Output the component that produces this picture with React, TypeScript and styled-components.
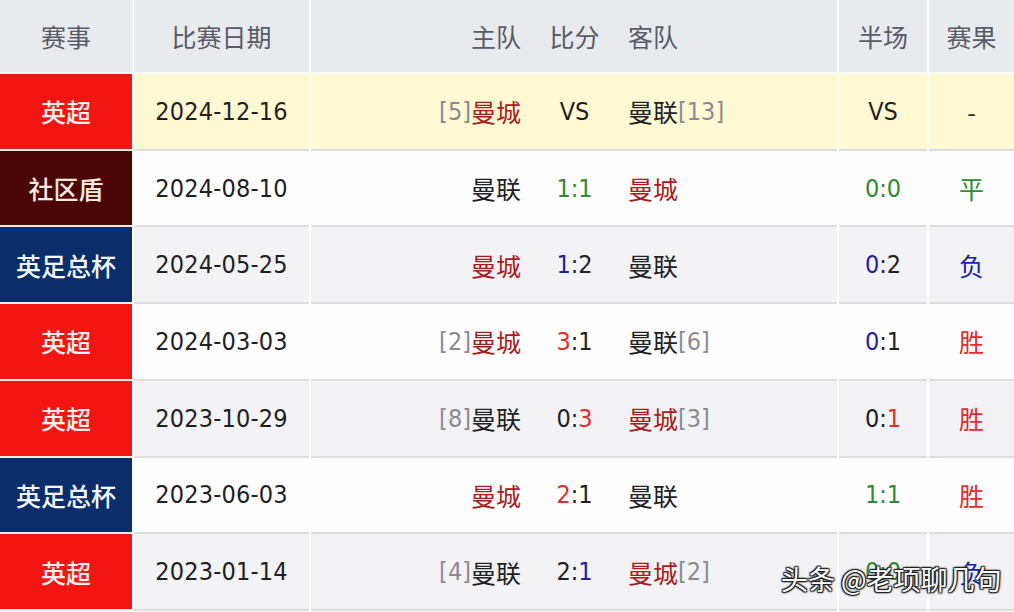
import styled, {createGlobalStyle, css} from "styled-components";

const GlobalStyle = createGlobalStyle`
  html, body {
    margin: 0;
    padding: 0;
    background: #ffffff;
  }
  body {
    font-family: "DejaVu Sans Condensed", "DejaVu Sans", "Noto Sans CJK SC", sans-serif;
  }
`

type Tone = 'win' | 'lose' | 'draw';
type Bg = 'yellow' | 'white' | 'grey';
type Comp = 'epl' | 'shield' | 'fa';

interface Team {
    name: string;
    rank?: string;
    city?: boolean;
}

interface Score {
    h: string;
    a: string;
    side?: 'h' | 'a';
    tone?: Tone;
}

interface Match {
    comp: Comp;
    date: string;
    bg: Bg;
    home: Team;
    away: Team;
    score?: Score;
    half?: Score;
    result: string;
    resultTone?: Tone;
}

const compNames: Record<Comp, string> = {
    epl: '英超',
    shield: '社区盾',
    fa: '英足总杯',
};

const compColors: Record<Comp, { bg: string; fg: string }> = {
    epl: {bg: '#f31512', fg: '#fff1ee'},
    shield: {bg: '#4a0505', fg: '#ffeae2'},
    fa: {bg: '#0b2e6b', fg: '#f4f8ff'},
};

const rowColors: Record<Bg, string> = {
    yellow: '#fffad4',
    white: '#fefefe',
    grey: '#f3f3f5',
};

const toneColors: Record<Tone, string> = {
    win: '#e32b2b',
    lose: '#1d1fa6',
    draw: '#2f8a32',
};

const matches: Match[] = [
    {
        comp: 'epl', date: '2024-12-16', bg: 'yellow',
        home: {name: '曼城', rank: '5', city: true}, away: {name: '曼联', rank: '13'},
        result: '-',
    },
    {
        comp: 'shield', date: '2024-08-10', bg: 'white',
        home: {name: '曼联'}, away: {name: '曼城', city: true},
        score: {h: '1', a: '1', tone: 'draw'}, half: {h: '0', a: '0', tone: 'draw'},
        result: '平', resultTone: 'draw',
    },
    {
        comp: 'fa', date: '2024-05-25', bg: 'grey',
        home: {name: '曼城', city: true}, away: {name: '曼联'},
        score: {h: '1', a: '2', side: 'h', tone: 'lose'}, half: {h: '0', a: '2', side: 'h', tone: 'lose'},
        result: '负', resultTone: 'lose',
    },
    {
        comp: 'epl', date: '2024-03-03', bg: 'white',
        home: {name: '曼城', rank: '2', city: true}, away: {name: '曼联', rank: '6'},
        score: {h: '3', a: '1', side: 'h', tone: 'win'}, half: {h: '0', a: '1', side: 'h', tone: 'lose'},
        result: '胜', resultTone: 'win',
    },
    {
        comp: 'epl', date: '2023-10-29', bg: 'grey',
        home: {name: '曼联', rank: '8'}, away: {name: '曼城', rank: '3', city: true},
        score: {h: '0', a: '3', side: 'a', tone: 'win'}, half: {h: '0', a: '1', side: 'a', tone: 'win'},
        result: '胜', resultTone: 'win',
    },
    {
        comp: 'fa', date: '2023-06-03', bg: 'white',
        home: {name: '曼城', city: true}, away: {name: '曼联'},
        score: {h: '2', a: '1', side: 'h', tone: 'win'}, half: {h: '1', a: '1', tone: 'draw'},
        result: '胜', resultTone: 'win',
    },
    {
        comp: 'epl', date: '2023-01-14', bg: 'grey',
        home: {name: '曼联', rank: '4'}, away: {name: '曼城', rank: '2', city: true},
        score: {h: '2', a: '1', side: 'a', tone: 'lose'}, half: {h: '0', a: '0', tone: 'draw'},
        result: '负', resultTone: 'lose',
    },
];

const Page = styled.div`
  position: relative;
  width: 1014px;
  height: 612px;
  overflow: hidden;
  background: #ffffff;
`

const Table = styled.div`
  display: grid;
  grid-template-rows: 74px repeat(7, 1fr);
  height: 611px;
`

const columns = css`
  display: grid;
  grid-template-columns: 132px 175px 526px 88px 1fr;
  column-gap: 2px;
`

const HeaderRow = styled.div`
  ${columns};
  background: #fbfbfc;
  padding-bottom: 2px;
`

const HeadCell = styled.div`
  display: flex;
  align-items: center;
  justify-content: center;
  background: #e9eaed;
  color: #575c67;
  font-family: "Noto Sans CJK SC", sans-serif;
  font-size: 25px;
`

const Row = styled.div`
  ${columns};
  background: #fdfdfd;
`

const Cell = styled.div<{ $bg: Bg }>`
  display: flex;
  align-items: center;
  justify-content: center;
  background: ${({$bg}) => rowColors[$bg]};
  border-bottom: 2px solid #dcdde0;
  color: #1f1f24;
  font-size: 24px;
`

const CompCell = styled.div<{ $comp: Comp }>`
  display: flex;
  align-items: center;
  justify-content: center;
  background: ${({$comp}) => compColors[$comp].bg};
  color: ${({$comp}) => compColors[$comp].fg};
  border-bottom: 2px solid #f0eded;
  font-family: "Noto Sans CJK SC", sans-serif;
  font-size: 25px;
  font-weight: 500;
`

const DateText = styled.span`
  font-size: 25px;
  letter-spacing: 0.2px;
`

const Teams = styled.div`
  display: grid;
  grid-template-columns: 210px 107px 1fr;
  align-items: center;
  width: 100%;
  height: 100%;
`

const Side = styled.div<{ $align: 'left' | 'right' | 'center' }>`
  display: flex;
  align-items: center;
  justify-content: ${({$align}) => $align === 'right' ? 'flex-end' : $align === 'left' ? 'flex-start' : 'center'};
  white-space: nowrap;
`

const TeamName = styled.span<{ $city?: boolean }>`
  font-family: "Noto Sans CJK SC", sans-serif;
  font-size: 25px;
  color: ${({$city}) => $city ? '#a81c1c' : '#222226'};
`

const Rank = styled.span`
  color: #8b8b8e;
  font-size: 25px;
  font-weight: 300;
`

const ScoreText = styled.span<{ $tone?: Tone }>`
  font-size: 25px;
  color: ${({$tone}) => $tone ? toneColors[$tone] : '#1f1f24'};
`

const Mark = styled.span<{ $tone: Tone }>`
  color: ${({$tone}) => toneColors[$tone]};
`

const Result = styled.span<{ $tone?: Tone }>`
  font-family: "Noto Sans CJK SC", sans-serif;
  font-size: 25px;
  color: ${({$tone}) => $tone ? toneColors[$tone] : '#2a2a2e'};
`

// watermark stamped over the last row, like the original screenshot
const Watermark = styled.div`
  position: absolute;
  left: 781px;
  top: 559px;
  font-family: "Noto Sans CJK SC", sans-serif;
  font-size: 27px;
  color: #ffffff;
  white-space: nowrap;
  text-shadow: 1px 1px 1px #222, -1px -1px 1px #222, 1px -1px 1px #222, -1px 1px 1px #222, 0 0 3px #000;
`

function ScoreView({score}: { score?: Score }) {
    if (!score) return <ScoreText>VS</ScoreText>;
    if (score.tone === 'draw') {
        return <ScoreText $tone="draw">{score.h}:{score.a}</ScoreText>;
    }
    const tone = score.tone as Tone;
    return (
        <ScoreText>
            {score.side === 'h' ? <Mark $tone={tone}>{score.h}</Mark> : score.h}
            :
            {score.side === 'a' ? <Mark $tone={tone}>{score.a}</Mark> : score.a}
        </ScoreText>
    )
}

export default function App() {
    return (
        <Page>
            <GlobalStyle/>
            <Table>
                <HeaderRow>
                    <HeadCell>赛事</HeadCell>
                    <HeadCell>比赛日期</HeadCell>
                    <HeadCell>
                        <Teams>
                            <Side $align="right">主队</Side>
                            <Side $align="center">比分</Side>
                            <Side $align="left">客队</Side>
                        </Teams>
                    </HeadCell>
                    <HeadCell>半场</HeadCell>
                    <HeadCell>赛果</HeadCell>
                </HeaderRow>
                {matches.map(m => (
                    <Row key={m.date}>
                        <CompCell $comp={m.comp}>{compNames[m.comp]}</CompCell>
                        <Cell $bg={m.bg}><DateText>{m.date}</DateText></Cell>
                        <Cell $bg={m.bg}>
                            <Teams>
                                <Side $align="right">
                                    {m.home.rank && <Rank>[{m.home.rank}]</Rank>}
                                    <TeamName $city={m.home.city}>{m.home.name}</TeamName>
                                </Side>
                                <Side $align="center"><ScoreView score={m.score}/></Side>
                                <Side $align="left">
                                    <TeamName $city={m.away.city}>{m.away.name}</TeamName>
                                    {m.away.rank && <Rank>[{m.away.rank}]</Rank>}
                                </Side>
                            </Teams>
                        </Cell>
                        <Cell $bg={m.bg}><ScoreView score={m.half}/></Cell>
                        <Cell $bg={m.bg}><Result $tone={m.resultTone}>{m.result}</Result></Cell>
                    </Row>
                ))}
            </Table>
            <Watermark>头条 @老项聊几句</Watermark>
        </Page>
    )
}
